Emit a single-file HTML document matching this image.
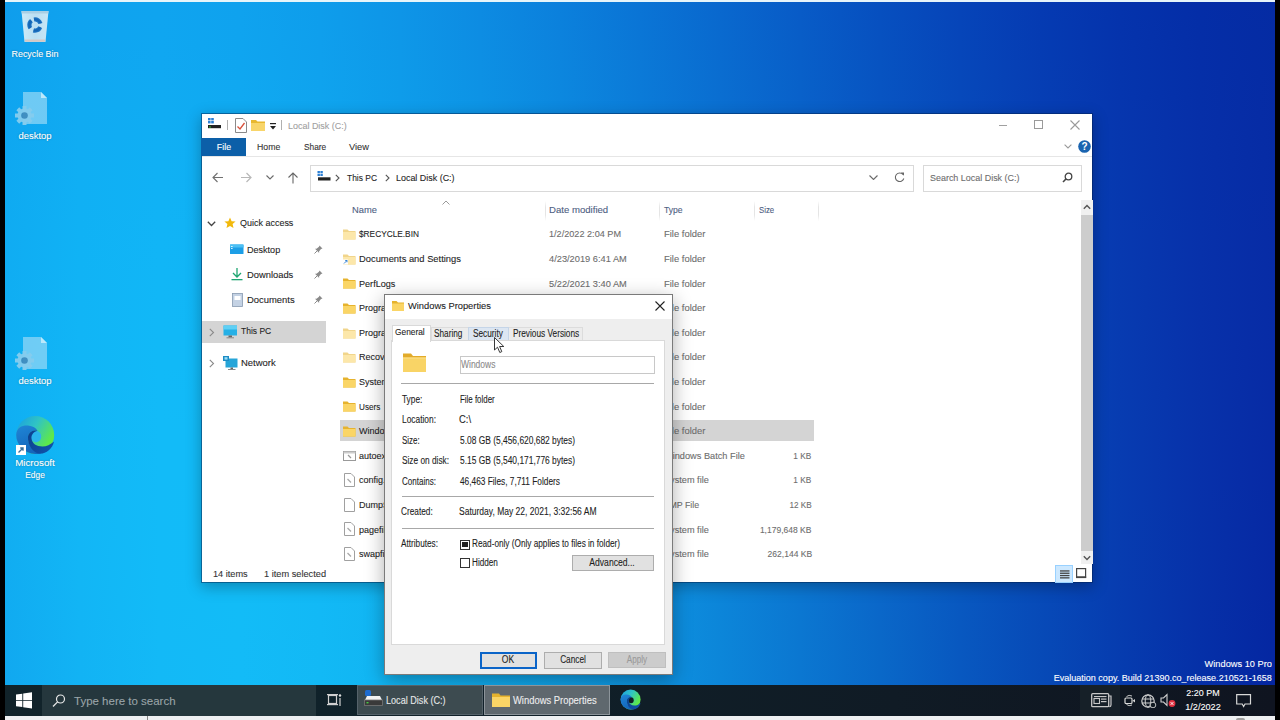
<!DOCTYPE html><html><head><meta charset="utf-8"><style>
html,body{margin:0;padding:0;}
body{width:1280px;height:720px;overflow:hidden;position:relative;background:#000;font-family:"Liberation Sans", sans-serif;}
.r{position:absolute;}
.t{position:absolute;white-space:nowrap;-webkit-text-stroke:0.1px;}
</style></head><body>
<div class="r" style="left:5px;top:0;width:1270px;height:716px;overflow:hidden"><div class="r" style="left:-5px;top:0;width:1280px;height:716px"><div class="r" style="left:0;top:0px;width:1280px;height:10px;background:linear-gradient(90deg,#0f9cec 0px,#0fa2ef 80px,#0fa3ef 160px,#0fa1ee 240px,#0e9ceb 320px,#0d94e7 400px,#0c8ae2 480px,#0b7fdc 560px,#0a74d5 640px,#0967ce 720px,#075bc6 800px,#064fbf 880px,#0544b8 960px,#053ab1 1040px,#0432ac 1120px,#042da7 1200px,#042ba3 1280px)"></div><div class="r" style="left:0;top:10px;width:1280px;height:10px;background:linear-gradient(90deg,#0f9dec 0px,#0fa3ef 80px,#0fa4ef 160px,#0fa2ee 240px,#0e9deb 320px,#0e95e7 400px,#0d8be2 480px,#0b80dc 560px,#0a74d5 640px,#0968ce 720px,#085bc7 800px,#064fbf 880px,#0644b8 960px,#053ab2 1040px,#0433ac 1120px,#042da7 1200px,#052ba3 1280px)"></div><div class="r" style="left:0;top:20px;width:1280px;height:10px;background:linear-gradient(90deg,#0f9eed 0px,#0fa3ef 80px,#0fa5f0 160px,#0fa3ef 240px,#0e9eec 320px,#0e96e8 400px,#0d8ce2 480px,#0b81dc 560px,#0a75d6 640px,#0969ce 720px,#085cc7 800px,#0750c0 880px,#0645b9 960px,#053bb2 1040px,#0533ac 1120px,#042ea7 1200px,#052ba3 1280px)"></div><div class="r" style="left:0;top:30px;width:1280px;height:10px;background:linear-gradient(90deg,#0f9fed 0px,#0fa4f0 80px,#0fa6f0 160px,#0fa4ef 240px,#0f9fec 320px,#0e97e8 400px,#0d8de3 480px,#0c82dd 560px,#0a76d6 640px,#096acf 720px,#085dc7 800px,#0751c0 880px,#0645b9 960px,#053bb2 1040px,#0533ac 1120px,#052ea7 1200px,#052ba3 1280px)"></div><div class="r" style="left:0;top:40px;width:1280px;height:10px;background:linear-gradient(90deg,#0fa0ed 0px,#0fa5f0 80px,#0fa7f1 160px,#0fa5ef 240px,#0f9fed 320px,#0e98e8 400px,#0d8ee3 480px,#0c83dd 560px,#0a77d6 640px,#096acf 720px,#085ec8 800px,#0751c0 880px,#0646b9 960px,#053cb3 1040px,#0534ad 1120px,#052ea7 1200px,#052ba3 1280px)"></div><div class="r" style="left:0;top:50px;width:1280px;height:10px;background:linear-gradient(90deg,#0fa1ee 0px,#0fa6f0 80px,#10a7f1 160px,#0fa5f0 240px,#0fa0ed 320px,#0e99e9 400px,#0d8fe4 480px,#0c84de 560px,#0b78d7 640px,#096bd0 720px,#085ec8 800px,#0752c1 880px,#0646ba 960px,#053cb3 1040px,#0534ad 1120px,#052ea8 1200px,#052ba3 1280px)"></div><div class="r" style="left:0;top:60px;width:1280px;height:10px;background:linear-gradient(90deg,#0fa1ee 0px,#0fa7f1 80px,#10a8f1 160px,#0fa6f0 240px,#0fa1ed 320px,#0e9ae9 400px,#0d90e4 480px,#0c85de 560px,#0b79d7 640px,#096cd0 720px,#085fc9 800px,#0753c1 880px,#0647ba 960px,#063db3 1040px,#0534ad 1120px,#052ea8 1200px,#052ba4 1280px)"></div><div class="r" style="left:0;top:70px;width:1280px;height:10px;background:linear-gradient(90deg,#0fa2ee 0px,#10a8f1 80px,#10a9f2 160px,#0fa7f0 240px,#0fa2ee 320px,#0e9bea 400px,#0d91e4 480px,#0c86de 560px,#0b7ad8 640px,#0a6dd0 720px,#0860c9 800px,#0753c1 880px,#0648ba 960px,#063db3 1040px,#0535ad 1120px,#052fa8 1200px,#052ba4 1280px)"></div><div class="r" style="left:0;top:80px;width:1280px;height:10px;background:linear-gradient(90deg,#0fa3ee 0px,#10a8f1 80px,#10aaf2 160px,#10a8f1 240px,#0fa3ee 320px,#0e9cea 400px,#0d92e5 480px,#0c87df 560px,#0b7ad8 640px,#0a6ed1 720px,#0861c9 800px,#0754c2 880px,#0648ba 960px,#063eb4 1040px,#0535ad 1120px,#052fa8 1200px,#062ba4 1280px)"></div><div class="r" style="left:0;top:90px;width:1280px;height:10px;background:linear-gradient(90deg,#0fa4ef 0px,#10a9f1 80px,#10abf2 160px,#10a9f1 240px,#0fa4ee 320px,#0e9cea 400px,#0d93e5 480px,#0c88df 560px,#0b7bd8 640px,#0a6ed1 720px,#0961ca 800px,#0854c2 880px,#0749bb 960px,#063eb4 1040px,#0535ae 1120px,#052fa8 1200px,#062ba4 1280px)"></div><div class="r" style="left:0;top:100px;width:1280px;height:10px;background:linear-gradient(90deg,#0fa4ef 0px,#10aaf2 80px,#10acf2 160px,#10aaf1 240px,#0fa5ef 320px,#0e9deb 400px,#0d94e5 480px,#0c88df 560px,#0b7cd9 640px,#0a6fd1 720px,#0962ca 800px,#0855c2 880px,#0749bb 960px,#063eb4 1040px,#0636ae 1120px,#052fa8 1200px,#062ba4 1280px)"></div><div class="r" style="left:0;top:110px;width:1280px;height:10px;background:linear-gradient(90deg,#0fa5ef 0px,#10abf2 80px,#10acf3 160px,#10abf2 240px,#0fa6ef 320px,#0f9eeb 400px,#0e94e6 480px,#0c89e0 560px,#0b7dd9 640px,#0a70d2 720px,#0963ca 800px,#0856c3 880px,#074abb 960px,#063fb4 1040px,#0636ae 1120px,#062fa8 1200px,#062ba4 1280px)"></div><div class="r" style="left:0;top:120px;width:1280px;height:10px;background:linear-gradient(90deg,#0fa5ef 0px,#10abf2 80px,#10adf3 160px,#10abf2 240px,#0fa6ef 320px,#0f9feb 400px,#0e95e6 480px,#0d8ae0 560px,#0b7ed9 640px,#0a70d2 720px,#0963ca 800px,#0856c3 880px,#074abb 960px,#063fb4 1040px,#0636ae 1120px,#062fa9 1200px,#062ba4 1280px)"></div><div class="r" style="left:0;top:130px;width:1280px;height:10px;background:linear-gradient(90deg,#0fa6f0 0px,#10acf3 80px,#10aef3 160px,#10acf2 240px,#0fa7f0 320px,#0fa0ec 400px,#0e96e6 480px,#0d8be0 560px,#0b7eda 640px,#0a71d2 720px,#0964cb 800px,#0857c3 880px,#074bbc 960px,#0640b5 1040px,#0637ae 1120px,#0630a9 1200px,#062ba4 1280px)"></div><div class="r" style="left:0;top:140px;width:1280px;height:10px;background:linear-gradient(90deg,#0fa7f0 0px,#10adf3 80px,#10aff4 160px,#10adf3 240px,#10a8f0 320px,#0fa1ec 400px,#0e97e7 480px,#0d8ce1 560px,#0c7fda 640px,#0a72d3 720px,#0965cb 800px,#0857c3 880px,#074bbc 960px,#0640b5 1040px,#0637ae 1120px,#0630a9 1200px,#062ba4 1280px)"></div><div class="r" style="left:0;top:150px;width:1280px;height:10px;background:linear-gradient(90deg,#0fa7f0 0px,#10adf3 80px,#10aff4 160px,#10aef3 240px,#10a9f0 320px,#0fa1ec 400px,#0e98e7 480px,#0d8ce1 560px,#0c80da 640px,#0a73d3 720px,#0965cb 800px,#0858c4 880px,#074cbc 960px,#0740b5 1040px,#0637af 1120px,#0630a9 1200px,#062ba4 1280px)"></div><div class="r" style="left:0;top:160px;width:1280px;height:10px;background:linear-gradient(90deg,#0fa8f0 0px,#10aef3 80px,#10b0f4 160px,#10aef3 240px,#10aaf1 320px,#0fa2ed 400px,#0e98e7 480px,#0d8de1 560px,#0c81da 640px,#0b73d3 720px,#0966cc 800px,#0859c4 880px,#074cbc 960px,#0741b5 1040px,#0637af 1120px,#0630a9 1200px,#062ba4 1280px)"></div><div class="r" style="left:0;top:170px;width:1280px;height:10px;background:linear-gradient(90deg,#0fa8f0 0px,#10aff3 80px,#10b1f4 160px,#10aff3 240px,#10aaf1 320px,#0fa3ed 400px,#0e99e8 480px,#0d8ee2 560px,#0c81db 640px,#0b74d3 720px,#0966cc 800px,#0859c4 880px,#074dbd 960px,#0741b5 1040px,#0638af 1120px,#0630a9 1200px,#062ba5 1280px)"></div><div class="r" style="left:0;top:180px;width:1280px;height:10px;background:linear-gradient(90deg,#0fa9f1 0px,#10aff4 80px,#10b1f5 160px,#10b0f4 240px,#10abf1 320px,#0fa4ed 400px,#0e9ae8 480px,#0d8fe2 560px,#0c82db 640px,#0b75d4 720px,#0a67cc 800px,#085ac4 880px,#084dbd 960px,#0742b6 1040px,#0638af 1120px,#0630a9 1200px,#062ba5 1280px)"></div><div class="r" style="left:0;top:190px;width:1280px;height:10px;background:linear-gradient(90deg,#0fa9f1 0px,#10b0f4 80px,#10b2f5 160px,#10b0f4 240px,#10acf1 320px,#0fa4ed 400px,#0e9be8 480px,#0d8fe2 560px,#0c83db 640px,#0b75d4 720px,#0a68cc 800px,#095ac5 880px,#084dbd 960px,#0742b6 1040px,#0638af 1120px,#0630a9 1200px,#072ba5 1280px)"></div><div class="r" style="left:0;top:200px;width:1280px;height:10px;background:linear-gradient(90deg,#0faaf1 0px,#10b0f4 80px,#10b2f5 160px,#10b1f4 240px,#10acf2 320px,#0fa5ee 400px,#0e9be9 480px,#0d90e2 560px,#0c83dc 640px,#0b76d4 720px,#0a68cd 800px,#095bc5 880px,#084ebd 960px,#0742b6 1040px,#0638af 1120px,#0630a9 1200px,#072ba5 1280px)"></div><div class="r" style="left:0;top:210px;width:1280px;height:10px;background:linear-gradient(90deg,#0faaf1 0px,#10b1f4 80px,#11b3f5 160px,#10b2f4 240px,#10adf2 320px,#0fa6ee 400px,#0e9ce9 480px,#0d91e3 560px,#0c84dc 640px,#0b76d5 720px,#0a69cd 800px,#095bc5 880px,#084ebd 960px,#0743b6 1040px,#0738af 1120px,#0631aa 1200px,#072ba5 1280px)"></div><div class="r" style="left:0;top:220px;width:1280px;height:10px;background:linear-gradient(90deg,#10abf1 0px,#10b1f4 80px,#11b4f5 160px,#11b2f5 240px,#10aef2 320px,#0fa6ee 400px,#0e9de9 480px,#0d91e3 560px,#0c85dc 640px,#0b77d5 720px,#0a69cd 800px,#095cc5 880px,#084fbe 960px,#0743b6 1040px,#0739b0 1120px,#0631aa 1200px,#072ba5 1280px)"></div><div class="r" style="left:0;top:230px;width:1280px;height:10px;background:linear-gradient(90deg,#10abf1 0px,#10b2f5 80px,#11b4f6 160px,#11b3f5 240px,#10aef2 320px,#0fa7ee 400px,#0f9de9 480px,#0e92e3 560px,#0c85dc 640px,#0b78d5 720px,#0a6acd 800px,#095cc5 880px,#084fbe 960px,#0743b6 1040px,#0739b0 1120px,#0731aa 1200px,#072ba5 1280px)"></div><div class="r" style="left:0;top:240px;width:1280px;height:10px;background:linear-gradient(90deg,#10abf2 0px,#10b2f5 80px,#11b5f6 160px,#11b3f5 240px,#10aff3 320px,#10a8ef 400px,#0f9eea 480px,#0e93e3 560px,#0c86dd 640px,#0b78d5 720px,#0a6ace 800px,#095dc6 880px,#084fbe 960px,#0743b7 1040px,#0739b0 1120px,#0731aa 1200px,#072ba5 1280px)"></div><div class="r" style="left:0;top:250px;width:1280px;height:10px;background:linear-gradient(90deg,#10acf2 0px,#10b3f5 80px,#11b5f6 160px,#11b4f5 240px,#10aff3 320px,#10a8ef 400px,#0f9fea 480px,#0e93e4 560px,#0d86dd 640px,#0b79d5 720px,#0a6bce 800px,#095dc6 880px,#0850be 960px,#0744b7 1040px,#0739b0 1120px,#0731aa 1200px,#072ba5 1280px)"></div><div class="r" style="left:0;top:260px;width:1280px;height:10px;background:linear-gradient(90deg,#10acf2 0px,#10b3f5 80px,#11b6f6 160px,#11b4f5 240px,#10b0f3 320px,#10a9ef 400px,#0f9fea 480px,#0e94e4 560px,#0d87dd 640px,#0b79d6 720px,#0a6bce 800px,#095ec6 880px,#0850be 960px,#0744b7 1040px,#073ab0 1120px,#0731aa 1200px,#072ba5 1280px)"></div><div class="r" style="left:0;top:270px;width:1280px;height:10px;background:linear-gradient(90deg,#10acf2 0px,#11b3f5 80px,#11b6f6 160px,#11b5f6 240px,#10b1f3 320px,#10a9ef 400px,#0fa0ea 480px,#0e94e4 560px,#0d88dd 640px,#0b7ad6 720px,#0a6cce 800px,#095ec6 880px,#0851be 960px,#0744b7 1040px,#073ab0 1120px,#0731aa 1200px,#072ba5 1280px)"></div><div class="r" style="left:0;top:280px;width:1280px;height:10px;background:linear-gradient(90deg,#10adf2 0px,#11b4f5 80px,#11b7f6 160px,#11b5f6 240px,#11b1f3 320px,#10aaf0 400px,#0fa0ea 480px,#0e95e4 560px,#0d88de 640px,#0c7ad6 720px,#0a6cce 800px,#095ec6 880px,#0851bf 960px,#0745b7 1040px,#073ab0 1120px,#0731aa 1200px,#072ba5 1280px)"></div><div class="r" style="left:0;top:290px;width:1280px;height:10px;background:linear-gradient(90deg,#10adf2 0px,#11b4f5 80px,#11b7f7 160px,#11b6f6 240px,#11b2f4 320px,#10aaf0 400px,#0fa1eb 480px,#0e95e5 560px,#0d89de 640px,#0c7bd6 720px,#0a6dcf 800px,#095fc7 880px,#0851bf 960px,#0845b7 1040px,#073ab0 1120px,#0731aa 1200px,#072ba5 1280px)"></div><div class="r" style="left:0;top:300px;width:1280px;height:10px;background:linear-gradient(90deg,#10adf2 0px,#11b4f6 80px,#11b7f7 160px,#11b6f6 240px,#11b2f4 320px,#10abf0 400px,#0fa1eb 480px,#0e96e5 560px,#0d89de 640px,#0c7bd6 720px,#0a6dcf 800px,#095fc7 880px,#0852bf 960px,#0845b7 1040px,#073ab0 1120px,#0731aa 1200px,#072ba5 1280px)"></div><div class="r" style="left:0;top:310px;width:1280px;height:10px;background:linear-gradient(90deg,#10adf2 0px,#11b5f6 80px,#11b8f7 160px,#11b7f6 240px,#11b3f4 320px,#10abf0 400px,#0fa2eb 480px,#0e97e5 560px,#0d8ade 640px,#0c7cd7 720px,#0b6ecf 800px,#0960c7 880px,#0852bf 960px,#0845b7 1040px,#073ab0 1120px,#0731aa 1200px,#072ba5 1280px)"></div><div class="r" style="left:0;top:320px;width:1280px;height:10px;background:linear-gradient(90deg,#10aef2 0px,#11b5f6 80px,#11b8f7 160px,#11b7f6 240px,#11b3f4 320px,#10acf0 400px,#0fa2eb 480px,#0e97e5 560px,#0d8ade 640px,#0c7cd7 720px,#0b6ecf 800px,#0960c7 880px,#0852bf 960px,#0846b8 1040px,#073bb0 1120px,#0731aa 1200px,#072ba5 1280px)"></div><div class="r" style="left:0;top:330px;width:1280px;height:10px;background:linear-gradient(90deg,#10aef2 0px,#11b5f6 80px,#11b8f7 160px,#11b8f7 240px,#11b4f4 320px,#10acf0 400px,#0fa3eb 480px,#0e98e5 560px,#0d8bdf 640px,#0c7dd7 720px,#0b6fcf 800px,#0960c7 880px,#0853bf 960px,#0846b8 1040px,#073bb1 1120px,#0731aa 1200px,#072ba5 1280px)"></div><div class="r" style="left:0;top:340px;width:1280px;height:10px;background:linear-gradient(90deg,#10aef2 0px,#11b6f6 80px,#11b9f7 160px,#11b8f7 240px,#11b4f4 320px,#10adf1 400px,#0fa3ec 480px,#0e98e6 560px,#0d8bdf 640px,#0c7dd7 720px,#0b6fcf 800px,#0a61c7 880px,#0953bf 960px,#0846b8 1040px,#073bb1 1120px,#0731aa 1200px,#072aa5 1280px)"></div><div class="r" style="left:0;top:350px;width:1280px;height:10px;background:linear-gradient(90deg,#10aef2 0px,#11b6f6 80px,#11b9f7 160px,#11b8f7 240px,#11b4f5 320px,#10adf1 400px,#0fa4ec 480px,#0e99e6 560px,#0d8cdf 640px,#0c7ed7 720px,#0b70cf 800px,#0a61c7 880px,#0953bf 960px,#0846b8 1040px,#073bb1 1120px,#0731aa 1200px,#072aa5 1280px)"></div><div class="r" style="left:0;top:360px;width:1280px;height:10px;background:linear-gradient(90deg,#10aef2 0px,#11b6f6 80px,#11b9f7 160px,#11b9f7 240px,#11b5f5 320px,#10aef1 400px,#0fa4ec 480px,#0e99e6 560px,#0d8cdf 640px,#0c7ed8 720px,#0b70d0 800px,#0a62c8 880px,#0954c0 960px,#0847b8 1040px,#073bb1 1120px,#0731aa 1200px,#072aa5 1280px)"></div><div class="r" style="left:0;top:370px;width:1280px;height:10px;background:linear-gradient(90deg,#10aef2 0px,#11b6f6 80px,#11baf8 160px,#11b9f7 240px,#11b5f5 320px,#10aef1 400px,#0fa5ec 480px,#0e99e6 560px,#0d8ddf 640px,#0c7fd8 720px,#0b70d0 800px,#0a62c8 880px,#0954c0 960px,#0847b8 1040px,#073bb1 1120px,#0731aa 1200px,#072aa5 1280px)"></div><div class="r" style="left:0;top:380px;width:1280px;height:10px;background:linear-gradient(90deg,#10aef2 0px,#11b6f6 80px,#11baf8 160px,#11b9f7 240px,#11b6f5 320px,#10aff1 400px,#10a5ec 480px,#0e9ae6 560px,#0d8ddf 640px,#0c7fd8 720px,#0b71d0 800px,#0a62c8 880px,#0954c0 960px,#0847b8 1040px,#073bb1 1120px,#0732aa 1200px,#072aa4 1280px)"></div><div class="r" style="left:0;top:390px;width:1280px;height:10px;background:linear-gradient(90deg,#10aef2 0px,#11b7f6 80px,#12baf8 160px,#12baf7 240px,#11b6f5 320px,#10aff1 400px,#10a6ec 480px,#0f9ae6 560px,#0d8ddf 640px,#0c80d8 720px,#0b71d0 800px,#0a63c8 880px,#0954c0 960px,#0847b8 1040px,#073bb1 1120px,#0732aa 1200px,#072aa4 1280px)"></div><div class="r" style="left:0;top:400px;width:1280px;height:10px;background:linear-gradient(90deg,#10aef2 0px,#11b7f6 80px,#12baf8 160px,#12baf7 240px,#11b6f5 320px,#11aff1 400px,#10a6ed 480px,#0f9be6 560px,#0d8ee0 640px,#0c80d8 720px,#0b71d0 800px,#0a63c8 880px,#0955c0 960px,#0847b8 1040px,#073cb1 1120px,#0732aa 1200px,#072aa4 1280px)"></div><div class="r" style="left:0;top:410px;width:1280px;height:10px;background:linear-gradient(90deg,#10aef2 0px,#11b7f6 80px,#12bbf8 160px,#12baf7 240px,#11b7f5 320px,#11b0f2 400px,#10a6ed 480px,#0f9be7 560px,#0d8ee0 640px,#0c80d8 720px,#0b72d0 800px,#0a63c8 880px,#0955c0 960px,#0848b8 1040px,#073cb1 1120px,#0732aa 1200px,#072aa4 1280px)"></div><div class="r" style="left:0;top:420px;width:1280px;height:10px;background:linear-gradient(90deg,#10aef2 0px,#11b7f6 80px,#12bbf8 160px,#12bbf7 240px,#11b7f5 320px,#11b0f2 400px,#10a7ed 480px,#0f9ce7 560px,#0d8fe0 640px,#0c81d8 720px,#0b72d0 800px,#0a63c8 880px,#0955c0 960px,#0848b8 1040px,#073cb1 1120px,#0732aa 1200px,#072aa4 1280px)"></div><div class="r" style="left:0;top:430px;width:1280px;height:10px;background:linear-gradient(90deg,#10aef2 0px,#11b7f6 80px,#12bbf8 160px,#12bbf8 240px,#11b7f5 320px,#11b0f2 400px,#10a7ed 480px,#0f9ce7 560px,#0e8fe0 640px,#0c81d8 720px,#0b72d0 800px,#0a64c8 880px,#0955c0 960px,#0848b8 1040px,#073cb1 1120px,#0731aa 1200px,#072aa4 1280px)"></div><div class="r" style="left:0;top:440px;width:1280px;height:10px;background:linear-gradient(90deg,#10aef2 0px,#11b7f6 80px,#12bbf8 160px,#12bbf8 240px,#11b7f6 320px,#11b1f2 400px,#10a8ed 480px,#0f9ce7 560px,#0e8fe0 640px,#0c81d8 720px,#0b73d1 800px,#0a64c8 880px,#0956c0 960px,#0848b8 1040px,#073cb1 1120px,#0731aa 1200px,#0729a4 1280px)"></div><div class="r" style="left:0;top:450px;width:1280px;height:10px;background:linear-gradient(90deg,#10aef2 0px,#11b7f6 80px,#12bbf8 160px,#12bbf8 240px,#11b8f6 320px,#11b1f2 400px,#10a8ed 480px,#0f9de7 560px,#0e90e0 640px,#0c82d9 720px,#0b73d1 800px,#0a64c8 880px,#0956c0 960px,#0848b8 1040px,#073cb1 1120px,#0731aa 1200px,#0729a4 1280px)"></div><div class="r" style="left:0;top:460px;width:1280px;height:10px;background:linear-gradient(90deg,#11aef2 0px,#11b7f6 80px,#12bbf8 160px,#12bbf8 240px,#11b8f6 320px,#11b1f2 400px,#10a8ed 480px,#0f9de7 560px,#0e90e0 640px,#0c82d9 720px,#0b73d1 800px,#0a65c8 880px,#0956c0 960px,#0848b8 1040px,#073cb1 1120px,#0731aa 1200px,#0729a4 1280px)"></div><div class="r" style="left:0;top:470px;width:1280px;height:10px;background:linear-gradient(90deg,#11aef2 0px,#11b7f6 80px,#12bbf8 160px,#12bbf8 240px,#12b8f6 320px,#11b2f2 400px,#10a8ed 480px,#0f9de7 560px,#0e90e0 640px,#0c82d9 720px,#0b74d1 800px,#0a65c8 880px,#0956c0 960px,#0849b8 1040px,#073cb1 1120px,#0731aa 1200px,#0729a4 1280px)"></div><div class="r" style="left:0;top:480px;width:1280px;height:10px;background:linear-gradient(90deg,#11aef2 0px,#12b7f6 80px,#12bbf8 160px,#12bcf8 240px,#12b8f6 320px,#11b2f2 400px,#10a9ed 480px,#0f9ee7 560px,#0e91e0 640px,#0c83d9 720px,#0b74d1 800px,#0a65c9 880px,#0956c0 960px,#0849b8 1040px,#073cb1 1120px,#0731aa 1200px,#0729a4 1280px)"></div><div class="r" style="left:0;top:490px;width:1280px;height:10px;background:linear-gradient(90deg,#11aef2 0px,#12b7f6 80px,#12bbf8 160px,#12bcf8 240px,#12b8f6 320px,#11b2f2 400px,#10a9ed 480px,#0f9ee7 560px,#0e91e0 640px,#0c83d9 720px,#0b74d1 800px,#0a65c9 880px,#0957c0 960px,#0849b8 1040px,#073cb1 1120px,#0731aa 1200px,#0629a3 1280px)"></div><div class="r" style="left:0;top:500px;width:1280px;height:10px;background:linear-gradient(90deg,#11aef2 0px,#12b7f6 80px,#12bbf8 160px,#12bcf8 240px,#12b9f6 320px,#11b2f2 400px,#10a9ed 480px,#0f9ee7 560px,#0e91e1 640px,#0c83d9 720px,#0b74d1 800px,#0a66c9 880px,#0957c0 960px,#0849b8 1040px,#073cb1 1120px,#0731a9 1200px,#0629a3 1280px)"></div><div class="r" style="left:0;top:510px;width:1280px;height:10px;background:linear-gradient(90deg,#11adf2 0px,#12b7f6 80px,#12bbf8 160px,#12bcf8 240px,#12b9f6 320px,#11b2f2 400px,#10aaed 480px,#0f9ee7 560px,#0e92e1 640px,#0c83d9 720px,#0b75d1 800px,#0a66c9 880px,#0957c0 960px,#0849b8 1040px,#073cb0 1120px,#0631a9 1200px,#0628a3 1280px)"></div><div class="r" style="left:0;top:520px;width:1280px;height:10px;background:linear-gradient(90deg,#11adf2 0px,#12b7f6 80px,#12bbf8 160px,#12bcf8 240px,#12b9f6 320px,#11b3f2 400px,#10aaee 480px,#0f9fe8 560px,#0e92e1 640px,#0c84d9 720px,#0b75d1 800px,#0a66c9 880px,#0957c0 960px,#0849b8 1040px,#073cb0 1120px,#0631a9 1200px,#0628a3 1280px)"></div><div class="r" style="left:0;top:530px;width:1280px;height:10px;background:linear-gradient(90deg,#11adf2 0px,#12b7f6 80px,#12bbf8 160px,#12bcf8 240px,#12b9f6 320px,#11b3f2 400px,#10aaee 480px,#0f9fe8 560px,#0e92e1 640px,#0c84d9 720px,#0b75d1 800px,#0a66c9 880px,#0957c0 960px,#0849b8 1040px,#073cb0 1120px,#0631a9 1200px,#0628a3 1280px)"></div><div class="r" style="left:0;top:540px;width:1280px;height:10px;background:linear-gradient(90deg,#11adf1 0px,#12b6f6 80px,#12bbf8 160px,#12bcf8 240px,#12b9f6 320px,#11b3f2 400px,#10aaee 480px,#0f9fe8 560px,#0e92e1 640px,#0c84d9 720px,#0b75d1 800px,#0a66c9 880px,#0957c0 960px,#0849b8 1040px,#073cb0 1120px,#0631a9 1200px,#0628a3 1280px)"></div><div class="r" style="left:0;top:550px;width:1280px;height:10px;background:linear-gradient(90deg,#11acf1 0px,#12b6f6 80px,#12bbf8 160px,#12bcf8 240px,#12b9f6 320px,#11b3f2 400px,#10aaee 480px,#0f9fe8 560px,#0e92e1 640px,#0c84d9 720px,#0b76d1 800px,#0a66c9 880px,#0958c0 960px,#0849b8 1040px,#073cb0 1120px,#0631a9 1200px,#0628a3 1280px)"></div><div class="r" style="left:0;top:560px;width:1280px;height:10px;background:linear-gradient(90deg,#11acf1 0px,#12b6f6 80px,#12bbf8 160px,#12bcf8 240px,#12b9f6 320px,#11b3f2 400px,#10aaee 480px,#0f9fe8 560px,#0e93e1 640px,#0c85d9 720px,#0b76d1 800px,#0a67c9 880px,#0958c0 960px,#0749b8 1040px,#073cb0 1120px,#0631a9 1200px,#0627a2 1280px)"></div><div class="r" style="left:0;top:570px;width:1280px;height:10px;background:linear-gradient(90deg,#11acf1 0px,#12b6f5 80px,#12bbf8 160px,#12bcf8 240px,#12b9f6 320px,#11b3f2 400px,#10abee 480px,#0fa0e8 560px,#0e93e1 640px,#0c85d9 720px,#0b76d1 800px,#0a67c9 880px,#0958c0 960px,#0749b8 1040px,#073cb0 1120px,#0631a9 1200px,#0627a2 1280px)"></div><div class="r" style="left:0;top:580px;width:1280px;height:10px;background:linear-gradient(90deg,#11abf1 0px,#12b6f5 80px,#12bbf7 160px,#12bcf8 240px,#12b9f6 320px,#11b3f2 400px,#10abee 480px,#0fa0e8 560px,#0e93e1 640px,#0c85d9 720px,#0b76d1 800px,#0a67c9 880px,#0858c0 960px,#0749b8 1040px,#073cb0 1120px,#0631a9 1200px,#0627a2 1280px)"></div><div class="r" style="left:0;top:590px;width:1280px;height:10px;background:linear-gradient(90deg,#11abf1 0px,#12b5f5 80px,#12bbf7 160px,#12bcf7 240px,#12b9f6 320px,#11b4f2 400px,#10abee 480px,#0fa0e8 560px,#0e93e1 640px,#0c85d9 720px,#0b76d1 800px,#0a67c9 880px,#0858c0 960px,#074ab8 1040px,#063cb0 1120px,#0631a8 1200px,#0627a2 1280px)"></div><div class="r" style="left:0;top:600px;width:1280px;height:10px;background:linear-gradient(90deg,#11abf1 0px,#12b5f5 80px,#12bbf7 160px,#12bcf7 240px,#12b9f6 320px,#11b4f2 400px,#10abee 480px,#0fa0e8 560px,#0e93e1 640px,#0c85d9 720px,#0b76d1 800px,#0a67c9 880px,#0858c0 960px,#074ab8 1040px,#063cb0 1120px,#0630a8 1200px,#0527a2 1280px)"></div><div class="r" style="left:0;top:610px;width:1280px;height:10px;background:linear-gradient(90deg,#11aaf0 0px,#12b5f5 80px,#12baf7 160px,#12bcf7 240px,#12b9f6 320px,#11b4f2 400px,#10abee 480px,#0fa0e8 560px,#0e94e1 640px,#0c85d9 720px,#0b77d1 800px,#0a67c9 880px,#0858c0 960px,#074ab8 1040px,#063cb0 1120px,#0630a8 1200px,#0527a2 1280px)"></div><div class="r" style="left:0;top:620px;width:1280px;height:10px;background:linear-gradient(90deg,#11aaf0 0px,#12b4f5 80px,#13baf7 160px,#12bcf7 240px,#12b9f6 320px,#11b4f2 400px,#10abee 480px,#0fa0e8 560px,#0e94e1 640px,#0c86d9 720px,#0b77d1 800px,#0a67c8 880px,#0858c0 960px,#074ab8 1040px,#063caf 1120px,#0630a8 1200px,#0526a1 1280px)"></div><div class="r" style="left:0;top:630px;width:1280px;height:10px;background:linear-gradient(90deg,#11a9f0 0px,#12b4f5 80px,#13baf7 160px,#13bbf7 240px,#12b9f5 320px,#11b4f2 400px,#10abed 480px,#0fa0e8 560px,#0e94e1 640px,#0c86d9 720px,#0b77d1 800px,#0a68c8 880px,#0858c0 960px,#074ab7 1040px,#063caf 1120px,#0530a8 1200px,#0526a1 1280px)"></div><div class="r" style="left:0;top:640px;width:1280px;height:10px;background:linear-gradient(90deg,#11a9f0 0px,#12b4f4 80px,#13baf7 160px,#13bbf7 240px,#12b9f5 320px,#11b4f2 400px,#10abed 480px,#0fa0e8 560px,#0e94e1 640px,#0c86d9 720px,#0b77d1 800px,#0968c8 880px,#0858c0 960px,#074ab7 1040px,#063caf 1120px,#0530a8 1200px,#0526a1 1280px)"></div><div class="r" style="left:0;top:650px;width:1280px;height:10px;background:linear-gradient(90deg,#11a8f0 0px,#12b3f4 80px,#13b9f7 160px,#13bbf7 240px,#12b9f5 320px,#11b4f2 400px,#10abed 480px,#0fa1e7 560px,#0e94e1 640px,#0c86d9 720px,#0b77d1 800px,#0968c8 880px,#0858c0 960px,#074ab7 1040px,#063caf 1120px,#0530a8 1200px,#0526a1 1280px)"></div><div class="r" style="left:0;top:660px;width:1280px;height:10px;background:linear-gradient(90deg,#11a8ef 0px,#12b3f4 80px,#13b9f6 160px,#13bbf7 240px,#12b9f5 320px,#11b4f2 400px,#10abed 480px,#0fa1e7 560px,#0e94e1 640px,#0c86d9 720px,#0b77d1 800px,#0968c8 880px,#0858c0 960px,#074ab7 1040px,#063caf 1120px,#0530a7 1200px,#0525a1 1280px)"></div><div class="r" style="left:0;top:670px;width:1280px;height:10px;background:linear-gradient(90deg,#11a7ef 0px,#12b3f4 80px,#13b9f6 160px,#13bbf7 240px,#12b9f5 320px,#11b4f2 400px,#10abed 480px,#0fa1e7 560px,#0e94e1 640px,#0c86d9 720px,#0b77d1 800px,#0968c8 880px,#0858c0 960px,#074ab7 1040px,#063caf 1120px,#0530a7 1200px,#0525a0 1280px)"></div><div class="r" style="left:0;top:680px;width:1280px;height:10px;background:linear-gradient(90deg,#11a7ef 0px,#12b2f4 80px,#13b9f6 160px,#13bbf7 240px,#12b9f5 320px,#11b3f2 400px,#10abed 480px,#0fa1e7 560px,#0e94e0 640px,#0c86d9 720px,#0b77d1 800px,#0968c8 880px,#0858bf 960px,#074ab7 1040px,#063caf 1120px,#052fa7 1200px,#0425a0 1280px)"></div><div class="r" style="left:0;top:690px;width:1280px;height:10px;background:linear-gradient(90deg,#12a6ef 0px,#12b2f3 80px,#13b8f6 160px,#13baf6 240px,#12b9f5 320px,#11b3f2 400px,#10abed 480px,#0fa1e7 560px,#0e94e0 640px,#0c86d9 720px,#0b77d1 800px,#0968c8 880px,#0858bf 960px,#074ab7 1040px,#053cae 1120px,#052fa7 1200px,#0425a0 1280px)"></div><div class="r" style="left:0;top:700px;width:1280px;height:10px;background:linear-gradient(90deg,#12a6ee 0px,#12b1f3 80px,#13b8f6 160px,#13baf6 240px,#12b8f5 320px,#11b3f2 400px,#10abed 480px,#0fa1e7 560px,#0e94e0 640px,#0c86d9 720px,#0b77d0 800px,#0968c8 880px,#0858bf 960px,#064ab7 1040px,#053cae 1120px,#052fa7 1200px,#0424a0 1280px)"></div><div class="r" style="left:0;top:710px;width:1280px;height:10px;background:linear-gradient(90deg,#12a5ee 0px,#12b1f3 80px,#13b7f6 160px,#13baf6 240px,#12b8f5 320px,#12b3f1 400px,#10abed 480px,#0fa1e7 560px,#0e94e0 640px,#0c86d9 720px,#0b77d0 800px,#0968c8 880px,#0858bf 960px,#0649b6 1040px,#053bae 1120px,#042fa6 1200px,#04249f 1280px)"></div></div></div>
<div class="r" style="left:5px;top:0px;width:1270px;height:2px;background:#e6f4fa;"></div>
<div class="r" style="left:5px;top:716px;width:1270px;height:4px;background:#eef0f2;"></div>
<svg class="r" style="left:18px;top:8px" width="34" height="36" viewBox="0 0 34 36">
<defs><linearGradient id="rb" x1="0" y1="0" x2="1" y2="0"><stop offset="0" stop-color="#d6eef8"/><stop offset="0.5" stop-color="#c4e2f2"/><stop offset="1" stop-color="#d0eaf6"/></linearGradient></defs>
<path d="M3.5 3 L30.5 3 L27.5 34 L6.5 34 Z" fill="url(#rb)" opacity="0.95"/>
<path d="M3.5 3 L30.5 3 L30.3 5.5 L3.7 5.5 Z" fill="#a9cfe4"/>
<path d="M6.8 31.5 L27.2 31.5 L27 33.8 L7 33.8 Z" fill="#d8c0b8" opacity="0.8"/>
<circle cx="17" cy="17" r="5.6" stroke="#1e74c4" stroke-width="4.2" stroke-dasharray="8 3.7" fill="none" transform="rotate(-100 17 17)"/>
<circle cx="17" cy="17" r="5.6" stroke="#0c56a6" stroke-width="2" stroke-dasharray="8 3.7" fill="none" transform="rotate(-100 17 17)" opacity="0.5"/>
</svg>
<div class="t" style="left:-114.8px;width:300px;text-align:center;top:48.20px;font-size:9.6px;color:#ffffff;line-height:12px;transform:scaleX(0.927);transform-origin:center;text-shadow:0 0 2px rgba(0,0,0,.35);">Recycle Bin</div>
<svg class="r" style="left:14px;top:92px" width="36" height="36" viewBox="0 0 36 36">
<path d="M9 0 L27 0 L33 6 L33 32 L9 32 Z" fill="#8fd6f6" opacity="0.75"/>
<path d="M27 0 L27 6 L33 6 Z" fill="#c4ecfc" opacity="0.9"/>
<g transform="translate(10.5,23.5)" fill="#86cdee" opacity="0.95">
<circle r="7"/>
<g><rect x="-2" y="-9.5" width="4" height="19"/><rect x="-9.5" y="-2" width="19" height="4"/>
<rect x="-2" y="-9.5" width="4" height="19" transform="rotate(45)"/><rect x="-2" y="-9.5" width="4" height="19" transform="rotate(-45)"/></g>
<circle r="3.3" fill="#3f8cbf"/>
</g></svg>
<div class="t" style="left:-114.8px;width:300px;text-align:center;top:130.30px;font-size:9.6px;color:#ffffff;line-height:12px;transform:scaleX(0.981);transform-origin:center;text-shadow:0 0 2px rgba(0,0,0,.35);">desktop</div>
<svg class="r" style="left:14px;top:337px" width="36" height="36" viewBox="0 0 36 36">
<path d="M9 0 L27 0 L33 6 L33 32 L9 32 Z" fill="#8fd6f6" opacity="0.75"/>
<path d="M27 0 L27 6 L33 6 Z" fill="#c4ecfc" opacity="0.9"/>
<g transform="translate(10.5,23.5)" fill="#86cdee" opacity="0.95">
<circle r="7"/>
<g><rect x="-2" y="-9.5" width="4" height="19"/><rect x="-9.5" y="-2" width="19" height="4"/>
<rect x="-2" y="-9.5" width="4" height="19" transform="rotate(45)"/><rect x="-2" y="-9.5" width="4" height="19" transform="rotate(-45)"/></g>
<circle r="3.3" fill="#3f8cbf"/>
</g></svg>
<div class="t" style="left:-114.8px;width:300px;text-align:center;top:375.30px;font-size:9.6px;color:#ffffff;line-height:12px;transform:scaleX(0.981);transform-origin:center;text-shadow:0 0 2px rgba(0,0,0,.35);">desktop</div>
<svg class="r" style="left:15px;top:415px" width="40" height="40" viewBox="0 0 40 40">
<defs>
<linearGradient id="eg1" x1="0.1" y1="0.1" x2="0.9" y2="0.6"><stop offset="0" stop-color="#1ea6dc"/><stop offset="0.45" stop-color="#30c4c4"/><stop offset="1" stop-color="#5ee84a"/></linearGradient>
<linearGradient id="eg2" x1="0" y1="0" x2="0.3" y2="1"><stop offset="0" stop-color="#1f86d6"/><stop offset="1" stop-color="#1466bc"/></linearGradient>
<linearGradient id="eg3" x1="0" y1="0" x2="1" y2="0.5"><stop offset="0" stop-color="#0c3f8e"/><stop offset="1" stop-color="#1052a8"/></linearGradient>
</defs>
<circle cx="20.2" cy="20" r="19" fill="url(#eg1)"/>
<ellipse cx="21" cy="21.5" rx="5.2" ry="5.8" fill="#2ab4ec"/>
<path d="M1.2 20 C1.5 12 8 10 13 10.5 C18 11 21 13 22.5 15.8 C18 14.5 13.5 17 13 22 C12.5 30 19 37.5 27 38.5 C25 39 22.5 39.2 20.2 39 C9.5 38.5 1.2 30 1.2 20 Z" fill="url(#eg2)"/>
<path d="M13 22 C13.5 17 18 14.5 22.5 15.8 C19 16.5 16 20 16.5 23.5 C17 28.5 21.5 31.5 27.5 31.5 C31.5 31.5 35.5 29.5 39 26.5 C37.5 34 31 38.8 25 38.6 C18 38.3 12.5 30 13 22 Z" fill="url(#eg3)"/>
<rect x="1" y="30" width="10" height="10" fill="#ffffff"/>
<path d="M3.5 37.5 L8 33 M5.2 33 L8 33 L8 35.8" stroke="#3a6f9a" stroke-width="1.4" fill="none"/>
</svg>
<div class="t" style="left:-115.4px;width:300px;text-align:center;top:457.30px;font-size:9.6px;color:#ffffff;line-height:12px;transform:scaleX(1.017);transform-origin:center;text-shadow:0 0 2px rgba(0,0,0,.35);">Microsoft</div>
<div class="t" style="left:-115.4px;width:300px;text-align:center;top:469.30px;font-size:9.6px;color:#ffffff;line-height:12px;transform:scaleX(0.874);transform-origin:center;text-shadow:0 0 2px rgba(0,0,0,.35);">Edge</div>
<div class="r" style="left:201px;top:113px;width:892px;height:470px;background:#ffffff;box-shadow:0 4px 14px rgba(0,0,0,0.28);border:1px solid rgba(0,30,80,0.45);background-clip:padding-box;box-sizing:border-box;"></div>
<svg class="r" style="left:207px;top:118px" width="15" height="11" viewBox="0 0 15 11"><rect x="1" y="0" width="2.6" height="2.4" fill="#2b7fd4"/><rect x="4.2" y="0" width="2.6" height="2.4" fill="#2b7fd4"/><rect x="1" y="3" width="2.6" height="2.4" fill="#2b7fd4"/><rect x="4.2" y="3" width="2.6" height="2.4" fill="#2b7fd4"/><rect x="1" y="7" width="13" height="3.2" fill="#222"/><rect x="2" y="8.5" width="2" height="1" fill="#3c3"/></svg>
<div class="r" style="left:227px;top:120px;width:1px;height:10px;background:#b0b0b0;"></div>
<svg class="r" style="left:235px;top:118px" width="12" height="15" viewBox="0 0 12 15"><path d="M0.5 0.5 L8 0.5 L11.5 4 L11.5 14.5 L0.5 14.5 Z" fill="#fff" stroke="#8a8a8a"/><path d="M2.5 8.5 L5 11 L9.5 5" stroke="#d8503a" stroke-width="1.3" fill="none"/></svg>
<svg class="r" style="left:251px;top:119px" width="14" height="12" viewBox="0 0 14 12"><path d="M0 1 L5 1 L6.5 2.5 L14 2.5 L14 12 L0 12 Z" fill="#e8b830"/><rect x="0" y="4" width="14" height="8" fill="#f8d56a"/></svg>
<svg class="r" style="left:269px;top:123px" width="8" height="8" viewBox="0 0 8 8"><rect x="1" y="0" width="6" height="1.2" fill="#222"/><path d="M1 3 L7 3 L4 6.5 Z" fill="#222"/></svg>
<div class="r" style="left:281px;top:120px;width:1px;height:10px;background:#b0b0b0;"></div>
<div class="t" style="left:288.20px;top:119.50px;font-size:9.8px;color:#a0a0a0;line-height:12px;transform:scaleX(0.914);transform-origin:left;">Local Disk (C:)</div>
<div class="r" style="left:998.5px;top:125px;width:8.5px;height:1px;background:#a0a0a0;"></div>
<div class="r" style="left:1034px;top:120px;width:9px;height:9px;background:transparent;border:1px solid #9a9a9a;box-sizing:border-box;"></div>
<svg class="r" style="left:1070px;top:120px" width="10" height="10" viewBox="0 0 10 10"><path d="M0.5 0.5 L9.5 9.5 M9.5 0.5 L0.5 9.5" stroke="#9a9a9a" stroke-width="1.1"/></svg>
<div class="r" style="left:201px;top:138px;width:45px;height:17.5px;background:#0c5fa8;"></div>
<div class="t" style="left:74.1px;width:300px;text-align:center;top:141.00px;font-size:9.8px;color:#ffffff;line-height:12px;transform:scaleX(0.902);transform-origin:center;">File</div>
<div class="t" style="left:256.97px;top:141.00px;font-size:9.8px;color:#333;line-height:12px;transform:scaleX(0.889);transform-origin:left;">Home</div>
<div class="t" style="left:303.99px;top:141.00px;font-size:9.8px;color:#333;line-height:12px;transform:scaleX(0.851);transform-origin:left;">Share</div>
<div class="t" style="left:349.43px;top:141.00px;font-size:9.8px;color:#333;line-height:12px;transform:scaleX(0.949);transform-origin:left;">View</div>
<svg class="r" style="left:1063.5px;top:144.3px" width="8" height="5" viewBox="0 0 8 5"><path d="M0.6 0.6 L4 4 L7.4 0.6" stroke="#9a9a9a" stroke-width="1.1" fill="none"/></svg>
<svg class="r" style="left:1078px;top:140px" width="13" height="13" viewBox="0 0 13 13"><circle cx="6.5" cy="6.5" r="6.3" fill="#1a64b0"/><text x="6.5" y="10.2" font-size="10" font-weight="bold" text-anchor="middle" fill="#fff" font-family="Liberation Sans">?</text></svg>
<div class="r" style="left:202px;top:156px;width:890px;height:1px;background:#e6e6e6;"></div>
<svg class="r" style="left:212px;top:172px" width="12" height="11" viewBox="0 0 12 11"><path d="M11 5.5 L1 5.5 M5.5 1 L1 5.5 L5.5 10" stroke="#707070" stroke-width="1.1" fill="none"/></svg>
<svg class="r" style="left:240px;top:172px" width="12" height="11" viewBox="0 0 12 11"><path d="M1 5.5 L11 5.5 M6.5 1 L11 5.5 L6.5 10" stroke="#b8b8b8" stroke-width="1.2" fill="none"/></svg>
<svg class="r" style="left:266px;top:175px" width="8" height="5" viewBox="0 0 8 5"><path d="M0.5 0.5 L4 4 L7.5 0.5" stroke="#6a6a6a" stroke-width="1.1" fill="none"/></svg>
<svg class="r" style="left:287px;top:172px" width="12" height="12" viewBox="0 0 12 12"><path d="M6 11.5 L6 1 M1.5 5.5 L6 1 L10.5 5.5" stroke="#666" stroke-width="1.1" fill="none"/></svg>
<div class="r" style="left:310px;top:165px;width:604px;height:26.5px;background:#fff;border:1px solid #d9d9d9;box-sizing:border-box;"></div>
<svg class="r" style="left:317px;top:171px" width="14" height="10" viewBox="0 0 14 10"><rect x="0.5" y="0" width="2.4" height="2.2" fill="#2b7fd4"/><rect x="3.4" y="0" width="2.4" height="2.2" fill="#2b7fd4"/><rect x="0.5" y="2.8" width="2.4" height="2.2" fill="#2b7fd4"/><rect x="3.4" y="2.8" width="2.4" height="2.2" fill="#2b7fd4"/><rect x="1" y="6.3" width="12.5" height="3.2" fill="#222"/></svg>
<svg class="r" style="left:335px;top:174px" width="5" height="8" viewBox="0 0 5 8"><path d="M0.8 0.8 L4 4 L0.8 7.2" stroke="#555" stroke-width="1.1" fill="none"/></svg>
<div class="t" style="left:346.98px;top:171.50px;font-size:9.8px;color:#1e1e1e;line-height:12px;transform:scaleX(0.861);transform-origin:left;">This PC</div>
<svg class="r" style="left:385px;top:174px" width="5" height="8" viewBox="0 0 5 8"><path d="M0.8 0.8 L4 4 L0.8 7.2" stroke="#555" stroke-width="1.1" fill="none"/></svg>
<div class="t" style="left:396.45px;top:171.50px;font-size:9.8px;color:#1e1e1e;line-height:12px;transform:scaleX(0.912);transform-origin:left;">Local Disk (C:)</div>
<svg class="r" style="left:869px;top:175px" width="9" height="5" viewBox="0 0 9 5"><path d="M0.5 0.5 L4.5 4.5 L8.5 0.5" stroke="#6a6a6a" stroke-width="1.1" fill="none"/></svg>
<svg class="r" style="left:894px;top:172px" width="11" height="11" viewBox="0 0 11 11"><path d="M9 2.5 A4.3 4.3 0 1 0 9.8 6.5" stroke="#666" stroke-width="1.1" fill="none"/><path d="M6.8 0.6 L10 0.6 L10 3.8 Z" fill="#666"/></svg>
<div class="r" style="left:923px;top:165px;width:159px;height:26.5px;background:#fff;border:1px solid #d9d9d9;box-sizing:border-box;"></div>
<div class="t" style="left:929.85px;top:171.50px;font-size:9.8px;color:#6d6d6d;line-height:12px;transform:scaleX(0.913);transform-origin:left;">Search Local Disk (C:)</div>
<svg class="r" style="left:1062px;top:172px" width="11" height="11" viewBox="0 0 11 11"><circle cx="6.5" cy="4.5" r="3.3" stroke="#444" stroke-width="1.3" fill="none"/><path d="M4.2 6.8 L1 10" stroke="#444" stroke-width="1.6"/></svg>
<svg class="r" style="left:207px;top:221px" width="9" height="6" viewBox="0 0 9 6"><path d="M0.8 0.8 L4.5 4.5 L8.2 0.8" stroke="#444" stroke-width="1.3" fill="none"/></svg>
<svg class="r" style="left:224px;top:217px" width="12" height="12" viewBox="0 0 12 12"><path d="M6 0.5 L7.6 4.2 L11.6 4.5 L8.6 7.1 L9.5 11 L6 8.9 L2.5 11 L3.4 7.1 L0.4 4.5 L4.4 4.2 Z" fill="#f2b90c"/></svg>
<div class="t" style="left:240.45px;top:217.20px;font-size:9.8px;color:#1e1e1e;line-height:12px;transform:scaleX(0.916);transform-origin:left;">Quick access</div>
<svg class="r" style="left:230px;top:244px" width="14" height="11" viewBox="0 0 14 11"><rect x="0" y="0.5" width="13.5" height="9.5" rx="0.6" fill="#1c9ee6"/><rect x="0" y="0.5" width="13.5" height="3" fill="#4cc0f4"/><rect x="1.2" y="2" width="1.3" height="1" fill="#fff"/><rect x="1.2" y="4" width="1.3" height="1" fill="#fff"/></svg>
<div class="t" style="left:246.75px;top:243.50px;font-size:9.8px;color:#1e1e1e;line-height:12px;transform:scaleX(0.923);transform-origin:left;">Desktop</div>
<svg class="r" style="left:231px;top:267px" width="12" height="14" viewBox="0 0 12 14"><path d="M6 1 L6 9.5 M2 6 L6 10 L10 6" stroke="#1fa672" stroke-width="1.3" fill="none"/><rect x="0.5" y="12" width="11" height="1.3" fill="#1fa672"/></svg>
<div class="t" style="left:246.73px;top:268.70px;font-size:9.8px;color:#1e1e1e;line-height:12px;transform:scaleX(0.955);transform-origin:left;">Downloads</div>
<svg class="r" style="left:232px;top:293px" width="11" height="14" viewBox="0 0 11 14"><rect x="0.5" y="0.5" width="10" height="13" fill="#c4d2e4" stroke="#8899b0" stroke-width="0.8"/><rect x="2.5" y="3" width="6" height="4" fill="#fff"/></svg>
<div class="t" style="left:246.72px;top:294.00px;font-size:9.8px;color:#1e1e1e;line-height:12px;transform:scaleX(0.962);transform-origin:left;">Documents</div>
<svg class="r" style="left:314px;top:244.5px" width="9" height="10" viewBox="0 0 9 10"><path d="M5.5 0.5 L8.5 3.5 L7 4 L5 6.5 L5.2 8 L1 3.8 L2.5 3.8 L5 1.8 Z" fill="#8a8a8a"/><path d="M3 6 L0.5 8.5" stroke="#8a8a8a" stroke-width="1"/></svg>
<svg class="r" style="left:314px;top:269.7px" width="9" height="10" viewBox="0 0 9 10"><path d="M5.5 0.5 L8.5 3.5 L7 4 L5 6.5 L5.2 8 L1 3.8 L2.5 3.8 L5 1.8 Z" fill="#8a8a8a"/><path d="M3 6 L0.5 8.5" stroke="#8a8a8a" stroke-width="1"/></svg>
<svg class="r" style="left:314px;top:295px" width="9" height="10" viewBox="0 0 9 10"><path d="M5.5 0.5 L8.5 3.5 L7 4 L5 6.5 L5.2 8 L1 3.8 L2.5 3.8 L5 1.8 Z" fill="#8a8a8a"/><path d="M3 6 L0.5 8.5" stroke="#8a8a8a" stroke-width="1"/></svg>
<div class="r" style="left:202px;top:321px;width:124px;height:21.5px;background:#d4d4d4;"></div>
<svg class="r" style="left:209px;top:327.5px" width="6" height="9" viewBox="0 0 6 9"><path d="M0.8 0.8 L4.5 4.5 L0.8 8.2" stroke="#8a8a8a" stroke-width="1.1" fill="none"/></svg>
<svg class="r" style="left:223px;top:325px" width="15" height="14" viewBox="0 0 15 14"><rect x="0.5" y="0.5" width="13.5" height="10" fill="#26b0e6"/><rect x="0.5" y="0.5" width="13.5" height="4" fill="#5fd0f5"/><rect x="5.5" y="10.5" width="3.5" height="1.8" fill="#666"/><rect x="3.5" y="12.3" width="7.5" height="1" fill="#888"/></svg>
<div class="t" style="left:240.78px;top:325.00px;font-size:9.8px;color:#1e1e1e;line-height:12px;transform:scaleX(0.867);transform-origin:left;">This PC</div>
<svg class="r" style="left:209px;top:359px" width="6" height="9" viewBox="0 0 6 9"><path d="M0.8 0.8 L4.5 4.5 L0.8 8.2" stroke="#8a8a8a" stroke-width="1.1" fill="none"/></svg>
<svg class="r" style="left:223px;top:356px" width="15" height="14" viewBox="0 0 15 14"><rect x="2.5" y="2.5" width="12" height="9" fill="#26a5d8"/><rect x="0" y="0" width="6" height="5" fill="#1e8cc4"/><rect x="1.5" y="1.2" width="3" height="2.4" fill="#9de0f8"/><rect x="7.5" y="11.5" width="2.5" height="1.6" fill="#666"/><rect x="5" y="13" width="7.5" height="1" fill="#888"/></svg>
<div class="t" style="left:240.72px;top:356.50px;font-size:9.8px;color:#1e1e1e;line-height:12px;transform:scaleX(0.965);transform-origin:left;">Network</div>
<div class="t" style="left:352.33px;top:204.30px;font-size:9.8px;color:#4d6082;line-height:12px;transform:scaleX(0.952);transform-origin:left;">Name</div>
<svg class="r" style="left:442px;top:200px" width="8" height="5" viewBox="0 0 8 5"><path d="M0.5 4.5 L4 1 L7.5 4.5" stroke="#9a9a9a" stroke-width="1" fill="none"/></svg>
<div class="r" style="left:544.5px;top:201px;width:1px;height:20px;background:linear-gradient(#fff,#e5e5e5 30%,#e5e5e5 70%,#fff);"></div>
<div class="r" style="left:659px;top:201px;width:1px;height:20px;background:linear-gradient(#fff,#e5e5e5 30%,#e5e5e5 70%,#fff);"></div>
<div class="r" style="left:753.6px;top:201px;width:1px;height:20px;background:linear-gradient(#fff,#e5e5e5 30%,#e5e5e5 70%,#fff);"></div>
<div class="r" style="left:817.8px;top:201px;width:1px;height:20px;background:linear-gradient(#fff,#e5e5e5 30%,#e5e5e5 70%,#fff);"></div>
<div class="t" style="left:548.91px;top:204.30px;font-size:9.8px;color:#4d6082;line-height:12px;transform:scaleX(0.979);transform-origin:left;">Date modified</div>
<div class="t" style="left:663.77px;top:204.30px;font-size:9.8px;color:#4d6082;line-height:12px;transform:scaleX(0.875);transform-origin:left;">Type</div>
<div class="t" style="left:759.02px;top:204.30px;font-size:9.8px;color:#4d6082;line-height:12px;transform:scaleX(0.797);transform-origin:left;">Size</div>
<div class="r" style="left:340px;top:420.2px;width:474px;height:20.8px;background:#d4d4d4;"></div>
<svg class="r" style="left:343px;top:229.20000000000002px" width="13" height="11" viewBox="0 0 13 11"><g opacity="0.55"><path d="M0 0.5 L4.5 0.5 L6 2 L12.5 2 L12.5 10.5 L0 10.5 Z" fill="#e6b32e"/><rect x="0" y="3" width="12.5" height="7.5" fill="#fad566"/></g></svg>
<div class="t" style="left:358.79px;top:228.40px;font-size:9.8px;color:#1e1e1e;line-height:12px;transform:scaleX(0.847);transform-origin:left;">$RECYCLE.BIN</div>
<div class="t" style="left:548.94px;top:228.40px;font-size:9.8px;color:#6d6d6d;line-height:12px;transform:scaleX(0.931);transform-origin:left;">1/2/2022 2:04 PM</div>
<div class="t" style="left:663.72px;top:228.40px;font-size:9.8px;color:#6d6d6d;line-height:12px;transform:scaleX(0.964);transform-origin:left;">File folder</div>
<svg class="r" style="left:343px;top:253.8px" width="13" height="11" viewBox="0 0 13 11"><g opacity="0.55"><path d="M0 0.5 L4.5 0.5 L6 2 L12.5 2 L12.5 10.5 L0 10.5 Z" fill="#e6b32e"/><rect x="0" y="3" width="12.5" height="7.5" fill="#fad566"/></g><rect x="0" y="5.5" width="5" height="5" fill="#fff"/><path d="M1 9.5 L4 6.5 M2.2 6.5 L4 6.5 L4 8.3" stroke="#2a7bd0" stroke-width="0.9" fill="none"/></svg>
<div class="t" style="left:358.73px;top:253.00px;font-size:9.8px;color:#1e1e1e;line-height:12px;transform:scaleX(0.955);transform-origin:left;">Documents and Settings</div>
<div class="t" style="left:548.93px;top:253.00px;font-size:9.8px;color:#6d6d6d;line-height:12px;transform:scaleX(0.946);transform-origin:left;">4/23/2019 6:41 AM</div>
<div class="t" style="left:663.72px;top:253.00px;font-size:9.8px;color:#6d6d6d;line-height:12px;transform:scaleX(0.964);transform-origin:left;">File folder</div>
<svg class="r" style="left:343px;top:278.40000000000003px" width="13" height="11" viewBox="0 0 13 11"><g opacity="1"><path d="M0 0.5 L4.5 0.5 L6 2 L12.5 2 L12.5 10.5 L0 10.5 Z" fill="#e6b32e"/><rect x="0" y="3" width="12.5" height="7.5" fill="#fad566"/></g></svg>
<div class="t" style="left:358.74px;top:277.60px;font-size:9.8px;color:#1e1e1e;line-height:12px;transform:scaleX(0.928);transform-origin:left;">PerfLogs</div>
<div class="t" style="left:548.93px;top:277.60px;font-size:9.8px;color:#6d6d6d;line-height:12px;transform:scaleX(0.946);transform-origin:left;">5/22/2021 3:40 AM</div>
<div class="t" style="left:663.72px;top:277.60px;font-size:9.8px;color:#6d6d6d;line-height:12px;transform:scaleX(0.964);transform-origin:left;">File folder</div>
<svg class="r" style="left:343px;top:303.00000000000006px" width="13" height="11" viewBox="0 0 13 11"><g opacity="1"><path d="M0 0.5 L4.5 0.5 L6 2 L12.5 2 L12.5 10.5 L0 10.5 Z" fill="#e6b32e"/><rect x="0" y="3" width="12.5" height="7.5" fill="#fad566"/></g></svg>
<div class="t" style="left:358.75px;top:302.20px;font-size:9.8px;color:#1e1e1e;line-height:12px;transform:scaleX(0.920);transform-origin:left;">Program Files</div>
<div class="t" style="left:548.93px;top:302.20px;font-size:9.8px;color:#6d6d6d;line-height:12px;transform:scaleX(0.946);transform-origin:left;">5/22/2021 3:40 AM</div>
<div class="t" style="left:663.72px;top:302.20px;font-size:9.8px;color:#6d6d6d;line-height:12px;transform:scaleX(0.964);transform-origin:left;">File folder</div>
<svg class="r" style="left:343px;top:327.6px" width="13" height="11" viewBox="0 0 13 11"><g opacity="0.55"><path d="M0 0.5 L4.5 0.5 L6 2 L12.5 2 L12.5 10.5 L0 10.5 Z" fill="#e6b32e"/><rect x="0" y="3" width="12.5" height="7.5" fill="#fad566"/></g></svg>
<div class="t" style="left:358.75px;top:326.80px;font-size:9.8px;color:#1e1e1e;line-height:12px;transform:scaleX(0.920);transform-origin:left;">Program Files (x86)</div>
<div class="t" style="left:548.93px;top:326.80px;font-size:9.8px;color:#6d6d6d;line-height:12px;transform:scaleX(0.946);transform-origin:left;">5/22/2021 3:40 AM</div>
<div class="t" style="left:663.72px;top:326.80px;font-size:9.8px;color:#6d6d6d;line-height:12px;transform:scaleX(0.964);transform-origin:left;">File folder</div>
<svg class="r" style="left:343px;top:352.2px" width="13" height="11" viewBox="0 0 13 11"><g opacity="0.55"><path d="M0 0.5 L4.5 0.5 L6 2 L12.5 2 L12.5 10.5 L0 10.5 Z" fill="#e6b32e"/><rect x="0" y="3" width="12.5" height="7.5" fill="#fad566"/></g></svg>
<div class="t" style="left:358.75px;top:351.40px;font-size:9.8px;color:#1e1e1e;line-height:12px;transform:scaleX(0.920);transform-origin:left;">Recovery</div>
<div class="t" style="left:548.93px;top:351.40px;font-size:9.8px;color:#6d6d6d;line-height:12px;transform:scaleX(0.946);transform-origin:left;">5/22/2021 3:40 AM</div>
<div class="t" style="left:663.72px;top:351.40px;font-size:9.8px;color:#6d6d6d;line-height:12px;transform:scaleX(0.964);transform-origin:left;">File folder</div>
<svg class="r" style="left:343px;top:376.8px" width="13" height="11" viewBox="0 0 13 11"><g opacity="1"><path d="M0 0.5 L4.5 0.5 L6 2 L12.5 2 L12.5 10.5 L0 10.5 Z" fill="#e6b32e"/><rect x="0" y="3" width="12.5" height="7.5" fill="#fad566"/></g></svg>
<div class="t" style="left:358.75px;top:376.00px;font-size:9.8px;color:#1e1e1e;line-height:12px;transform:scaleX(0.920);transform-origin:left;">System Volume Information</div>
<div class="t" style="left:548.93px;top:376.00px;font-size:9.8px;color:#6d6d6d;line-height:12px;transform:scaleX(0.946);transform-origin:left;">5/22/2021 3:40 AM</div>
<div class="t" style="left:663.72px;top:376.00px;font-size:9.8px;color:#6d6d6d;line-height:12px;transform:scaleX(0.964);transform-origin:left;">File folder</div>
<svg class="r" style="left:343px;top:401.40000000000003px" width="13" height="11" viewBox="0 0 13 11"><g opacity="1"><path d="M0 0.5 L4.5 0.5 L6 2 L12.5 2 L12.5 10.5 L0 10.5 Z" fill="#e6b32e"/><rect x="0" y="3" width="12.5" height="7.5" fill="#fad566"/></g></svg>
<div class="t" style="left:358.80px;top:400.60px;font-size:9.8px;color:#1e1e1e;line-height:12px;transform:scaleX(0.832);transform-origin:left;">Users</div>
<div class="t" style="left:548.93px;top:400.60px;font-size:9.8px;color:#6d6d6d;line-height:12px;transform:scaleX(0.946);transform-origin:left;">5/22/2021 3:40 AM</div>
<div class="t" style="left:663.72px;top:400.60px;font-size:9.8px;color:#6d6d6d;line-height:12px;transform:scaleX(0.964);transform-origin:left;">File folder</div>
<svg class="r" style="left:343px;top:426.00000000000006px" width="13" height="11" viewBox="0 0 13 11"><g opacity="1"><path d="M0 0.5 L4.5 0.5 L6 2 L12.5 2 L12.5 10.5 L0 10.5 Z" fill="#e6b32e"/><rect x="0" y="3" width="12.5" height="7.5" fill="#fad566"/></g></svg>
<div class="t" style="left:358.75px;top:425.20px;font-size:9.8px;color:#1e1e1e;line-height:12px;transform:scaleX(0.920);transform-origin:left;">Windows</div>
<div class="t" style="left:548.93px;top:425.20px;font-size:9.8px;color:#6d6d6d;line-height:12px;transform:scaleX(0.946);transform-origin:left;">5/22/2021 3:40 AM</div>
<div class="t" style="left:663.72px;top:425.20px;font-size:9.8px;color:#6d6d6d;line-height:12px;transform:scaleX(0.964);transform-origin:left;">File folder</div>
<svg class="r" style="left:343px;top:449.6px" width="13" height="12" viewBox="0 0 13 12"><rect x="0.5" y="1.5" width="12" height="9" fill="#fff" stroke="#999"/><rect x="0.5" y="1.5" width="12" height="2" fill="#ccc"/><path d="M5 5 L8 8" stroke="#999" stroke-width="1.2"/></svg>
<div class="t" style="left:358.75px;top:449.80px;font-size:9.8px;color:#1e1e1e;line-height:12px;transform:scaleX(0.920);transform-origin:left;">autoexec.bat</div>
<div class="t" style="left:548.93px;top:449.80px;font-size:9.8px;color:#6d6d6d;line-height:12px;transform:scaleX(0.946);transform-origin:left;">5/22/2021 3:40 AM</div>
<div class="t" style="left:663.74px;top:449.80px;font-size:9.8px;color:#6d6d6d;line-height:12px;transform:scaleX(0.940);transform-origin:left;">Windows Batch File</div>
<div class="t" style="right:468.29px;top:449.80px;font-size:9.8px;color:#6d6d6d;line-height:12px;transform:scaleX(0.842);transform-origin:right;">1 KB</div>
<svg class="r" style="left:344px;top:473.2px" width="11" height="14" viewBox="0 0 11 14"><path d="M0.5 0.5 L7 0.5 L10.5 4 L10.5 13.5 L0.5 13.5 Z" fill="#fff" stroke="#a0a0a0"/><path d="M3.5 6 L7 9.5" stroke="#a8a8a8" stroke-width="1.2"/></svg>
<div class="t" style="left:358.75px;top:474.40px;font-size:9.8px;color:#1e1e1e;line-height:12px;transform:scaleX(0.920);transform-origin:left;">config.sys</div>
<div class="t" style="left:548.93px;top:474.40px;font-size:9.8px;color:#6d6d6d;line-height:12px;transform:scaleX(0.946);transform-origin:left;">5/22/2021 3:40 AM</div>
<div class="t" style="left:663.74px;top:474.40px;font-size:9.8px;color:#6d6d6d;line-height:12px;transform:scaleX(0.935);transform-origin:left;">System file</div>
<div class="t" style="right:468.29px;top:474.40px;font-size:9.8px;color:#6d6d6d;line-height:12px;transform:scaleX(0.842);transform-origin:right;">1 KB</div>
<svg class="r" style="left:344px;top:497.8px" width="11" height="14" viewBox="0 0 11 14"><path d="M0.5 0.5 L7 0.5 L10.5 4 L10.5 13.5 L0.5 13.5 Z" fill="#fff" stroke="#a0a0a0"/></svg>
<div class="t" style="left:358.75px;top:499.00px;font-size:9.8px;color:#1e1e1e;line-height:12px;transform:scaleX(0.920);transform-origin:left;">DumpStack.log.tmp</div>
<div class="t" style="left:548.93px;top:499.00px;font-size:9.8px;color:#6d6d6d;line-height:12px;transform:scaleX(0.946);transform-origin:left;">5/22/2021 3:40 AM</div>
<div class="t" style="left:663.76px;top:499.00px;font-size:9.8px;color:#6d6d6d;line-height:12px;transform:scaleX(0.902);transform-origin:left;">TMP File</div>
<div class="t" style="right:468.30px;top:499.00px;font-size:9.8px;color:#6d6d6d;line-height:12px;transform:scaleX(0.835);transform-origin:right;">12 KB</div>
<svg class="r" style="left:344px;top:522.4px" width="11" height="14" viewBox="0 0 11 14"><path d="M0.5 0.5 L7 0.5 L10.5 4 L10.5 13.5 L0.5 13.5 Z" fill="#fff" stroke="#a0a0a0"/><path d="M3.5 6 L7 9.5" stroke="#a8a8a8" stroke-width="1.2"/></svg>
<div class="t" style="left:358.75px;top:523.60px;font-size:9.8px;color:#1e1e1e;line-height:12px;transform:scaleX(0.920);transform-origin:left;">pagefile.sys</div>
<div class="t" style="left:548.93px;top:523.60px;font-size:9.8px;color:#6d6d6d;line-height:12px;transform:scaleX(0.946);transform-origin:left;">5/22/2021 3:40 AM</div>
<div class="t" style="left:663.74px;top:523.60px;font-size:9.8px;color:#6d6d6d;line-height:12px;transform:scaleX(0.935);transform-origin:left;">System file</div>
<div class="t" style="right:468.28px;top:523.60px;font-size:9.8px;color:#6d6d6d;line-height:12px;transform:scaleX(0.867);transform-origin:right;">1,179,648 KB</div>
<svg class="r" style="left:344px;top:547.0px" width="11" height="14" viewBox="0 0 11 14"><path d="M0.5 0.5 L7 0.5 L10.5 4 L10.5 13.5 L0.5 13.5 Z" fill="#fff" stroke="#a0a0a0"/><path d="M3.5 6 L7 9.5" stroke="#a8a8a8" stroke-width="1.2"/></svg>
<div class="t" style="left:358.75px;top:548.20px;font-size:9.8px;color:#1e1e1e;line-height:12px;transform:scaleX(0.920);transform-origin:left;">swapfile.sys</div>
<div class="t" style="left:548.93px;top:548.20px;font-size:9.8px;color:#6d6d6d;line-height:12px;transform:scaleX(0.946);transform-origin:left;">5/22/2021 3:40 AM</div>
<div class="t" style="left:663.74px;top:548.20px;font-size:9.8px;color:#6d6d6d;line-height:12px;transform:scaleX(0.935);transform-origin:left;">System file</div>
<div class="t" style="right:468.28px;top:548.20px;font-size:9.8px;color:#6d6d6d;line-height:12px;transform:scaleX(0.873);transform-origin:right;">262,144 KB</div>
<div class="r" style="left:1081px;top:200px;width:12px;height:364px;background:#f0f0f0;"></div>
<div class="r" style="left:1081px;top:215px;width:12px;height:336px;background:#cdcdcd;"></div>
<svg class="r" style="left:1083px;top:204px" width="8" height="6" viewBox="0 0 8 6"><path d="M0.8 4.8 L4 1.5 L7.2 4.8" stroke="#555" stroke-width="1.4" fill="none"/></svg>
<svg class="r" style="left:1083px;top:555px" width="8" height="6" viewBox="0 0 8 6"><path d="M0.8 1.2 L4 4.5 L7.2 1.2" stroke="#555" stroke-width="1.4" fill="none"/></svg>
<div class="t" style="left:212.84px;top:567.80px;font-size:9.8px;color:#333;line-height:12px;transform:scaleX(0.937);transform-origin:left;">14 items</div>
<div class="t" style="left:264.14px;top:567.80px;font-size:9.8px;color:#333;line-height:12px;transform:scaleX(0.941);transform-origin:left;">1 item selected</div>
<div class="r" style="left:1055px;top:564.5px;width:17.5px;height:18.5px;background:#cce8ff;border:1px solid #99d1ff;box-sizing:border-box;"></div>
<svg class="r" style="left:1060px;top:570px" width="10" height="9" viewBox="0 0 10 9"><rect x="0" y="0.3" width="9.5" height="1.3" fill="#444"/><rect x="0" y="2.6" width="9.5" height="1.3" fill="#444"/><rect x="0" y="4.9" width="9.5" height="1.3" fill="#444"/><rect x="0" y="7.2" width="9.5" height="1.3" fill="#444"/></svg>
<svg class="r" style="left:1076px;top:568px" width="11" height="11" viewBox="0 0 11 11"><rect x="0.6" y="0.6" width="9" height="8.5" fill="none" stroke="#444" stroke-width="1.2"/><rect x="0" y="8.5" width="10.2" height="1.6" fill="#444"/></svg>
<div class="r" style="left:384px;top:294px;width:289px;height:381px;background:#eeeeee;box-shadow:0 5px 18px rgba(0,0,0,0.32);border:1px solid #7a7a7a;box-sizing:border-box;"></div>
<div class="r" style="left:385px;top:295px;width:287px;height:23.5px;background:#ffffff;"></div>
<svg class="r" style="left:392px;top:301px" width="12" height="10" viewBox="0 0 12 10"><path d="M0 0 L4.5 0 L6 1.5 L12 1.5 L12 10 L0 10 Z" fill="#e6b32e"/><rect x="0" y="2.5" width="12" height="7.5" fill="#fad566"/></svg>
<div class="t" style="left:407.92px;top:300.00px;font-size:9.6px;color:#1e1e1e;line-height:12px;transform:scaleX(0.972);transform-origin:left;">Windows Properties</div>
<svg class="r" style="left:655px;top:301px" width="10" height="10" viewBox="0 0 10 10"><path d="M0.5 0.5 L9.5 9.5 M9.5 0.5 L0.5 9.5" stroke="#222" stroke-width="1.1"/></svg>
<div class="r" style="left:431.4px;top:326.7px;width:151.3px;height:14px;background:#ececec;border:1px solid #dcdcdc;border-bottom:none;box-sizing:border-box;"></div>
<div class="r" style="left:467.5px;top:326.7px;width:41px;height:14px;background:#dce6f2;border:1px solid #c5d5e8;border-bottom:none;box-sizing:border-box;"></div>
<div class="r" style="left:391px;top:340.4px;width:274px;height:305px;background:#ffffff;border:1px solid #d9d9d9;box-sizing:border-box;"></div>
<div class="r" style="left:391.9px;top:324.5px;width:39.5px;height:17px;background:#ffffff;border:1px solid #d9d9d9;border-bottom:none;box-sizing:border-box;"></div>
<div class="t" style="left:395.18px;top:326.00px;font-size:9.6px;color:#1e1e1e;line-height:12px;transform:scaleX(0.870);transform-origin:left;">General</div>
<div class="t" style="left:434.31px;top:327.60px;font-size:10px;color:#1e1e1e;line-height:12px;transform:scaleX(0.824);transform-origin:left;">Sharing</div>
<div class="t" style="left:473.01px;top:327.60px;font-size:10px;color:#1e1e1e;line-height:12px;transform:scaleX(0.825);transform-origin:left;">Security</div>
<div class="t" style="left:512.50px;top:327.60px;font-size:10px;color:#1e1e1e;line-height:12px;transform:scaleX(0.827);transform-origin:left;">Previous Versions</div>
<svg class="r" style="left:403px;top:353px" width="23" height="19" viewBox="0 0 23 19"><path d="M0 0.5 L8 0.5 L10 3 L23 3 L23 19 L0 19 Z" fill="#e2ab2a"/><rect x="0" y="4.5" width="23" height="14.5" fill="#f9d466"/><rect x="0" y="4.5" width="23" height="1" fill="#fbe08a"/></svg>
<div class="r" style="left:459.8px;top:356.3px;width:195px;height:17.5px;background:#fff;border:1px solid #c8c8c8;box-sizing:border-box;"></div>
<div class="t" style="left:461.49px;top:358.50px;font-size:10px;color:#8a8a8a;line-height:12px;transform:scaleX(0.848);transform-origin:left;">Windows</div>
<div class="r" style="left:401.3px;top:383px;width:253px;height:1px;background:#a8a8a8;border-bottom:1px solid #fff;"></div>
<div class="t" style="left:401.70px;top:393.50px;font-size:10px;color:#1e1e1e;line-height:12px;transform:scaleX(0.830);transform-origin:left;">Type:</div>
<div class="t" style="left:459.53px;top:393.50px;font-size:10px;color:#1e1e1e;line-height:12px;transform:scaleX(0.790);transform-origin:left;">File folder</div>
<div class="t" style="left:401.70px;top:414.40px;font-size:10px;color:#1e1e1e;line-height:12px;transform:scaleX(0.838);transform-origin:left;">Location:</div>
<div class="t" style="left:459.44px;top:414.40px;font-size:10px;color:#1e1e1e;line-height:12px;transform:scaleX(0.939);transform-origin:left;">C:\</div>
<div class="t" style="left:401.72px;top:434.80px;font-size:10px;color:#1e1e1e;line-height:12px;transform:scaleX(0.796);transform-origin:left;">Size:</div>
<div class="t" style="left:459.50px;top:434.80px;font-size:10px;color:#1e1e1e;line-height:12px;transform:scaleX(0.841);transform-origin:left;">5.08 GB (5,456,620,682 bytes)</div>
<div class="t" style="left:401.70px;top:455.20px;font-size:10px;color:#1e1e1e;line-height:12px;transform:scaleX(0.829);transform-origin:left;">Size on disk:</div>
<div class="t" style="left:459.50px;top:455.20px;font-size:10px;color:#1e1e1e;line-height:12px;transform:scaleX(0.841);transform-origin:left;">5.15 GB (5,540,171,776 bytes)</div>
<div class="t" style="left:401.72px;top:475.80px;font-size:10px;color:#1e1e1e;line-height:12px;transform:scaleX(0.805);transform-origin:left;">Contains:</div>
<div class="t" style="left:459.50px;top:475.80px;font-size:10px;color:#1e1e1e;line-height:12px;transform:scaleX(0.830);transform-origin:left;">46,463 Files, 7,711 Folders</div>
<div class="r" style="left:401.6px;top:496.3px;width:252px;height:1px;background:#a8a8a8;"></div>
<div class="t" style="left:401.30px;top:505.70px;font-size:10px;color:#1e1e1e;line-height:12px;transform:scaleX(0.826);transform-origin:left;">Created:</div>
<div class="t" style="left:459.49px;top:505.70px;font-size:10px;color:#1e1e1e;line-height:12px;transform:scaleX(0.851);transform-origin:left;">Saturday, May 22, 2021, 3:32:56 AM</div>
<div class="r" style="left:401.6px;top:527.6px;width:252px;height:1px;background:#a8a8a8;"></div>
<div class="t" style="left:401.31px;top:537.80px;font-size:10px;color:#1e1e1e;line-height:12px;transform:scaleX(0.820);transform-origin:left;">Attributes:</div>
<div class="r" style="left:459.6px;top:539.5px;width:10.5px;height:10px;background:#fff;border:1px solid #333;box-sizing:border-box;"></div>
<div class="r" style="left:462.1px;top:542px;width:5.5px;height:5px;background:#222;"></div>
<div class="t" style="left:472.11px;top:537.80px;font-size:10px;color:#1e1e1e;line-height:12px;transform:scaleX(0.822);transform-origin:left;">Read-only (Only applies to files in folder)</div>
<div class="r" style="left:459.6px;top:557.7px;width:10.5px;height:10px;background:#fff;border:1px solid #333;box-sizing:border-box;"></div>
<div class="t" style="left:472.11px;top:556.50px;font-size:10px;color:#1e1e1e;line-height:12px;transform:scaleX(0.817);transform-origin:left;">Hidden</div>
<div class="r" style="left:572px;top:554.6px;width:82px;height:16.2px;background:#e1e1e1;border:1px solid #adadad;box-sizing:border-box;"></div>
<div class="t" style="left:462.29999999999995px;width:300px;text-align:center;top:556.70px;font-size:10px;color:#1e1e1e;line-height:12px;transform:scaleX(0.860);transform-origin:center;">Advanced...</div>
<div class="r" style="left:480px;top:652px;width:57.3px;height:16.7px;background:#e1e1e1;border:2px solid #0a64c8;box-sizing:border-box;"></div>
<div class="t" style="left:358.45px;width:300px;text-align:center;top:654.30px;font-size:10px;color:#1e1e1e;line-height:12px;transform:scaleX(0.851);transform-origin:center;">OK</div>
<div class="r" style="left:544.2px;top:652px;width:57.6px;height:16.7px;background:#e1e1e1;border:1px solid #adadad;box-sizing:border-box;"></div>
<div class="t" style="left:422.54999999999995px;width:300px;text-align:center;top:654.30px;font-size:10px;color:#1e1e1e;line-height:12px;transform:scaleX(0.826);transform-origin:center;">Cancel</div>
<div class="r" style="left:608px;top:652px;width:58px;height:16.3px;background:#cccccc;border:1px solid #bfbfbf;box-sizing:border-box;"></div>
<div class="t" style="left:486.5px;width:300px;text-align:center;top:654.30px;font-size:10px;color:#9a9a9a;line-height:12px;transform:scaleX(0.815);transform-origin:center;">Apply</div>
<svg class="r" style="left:494px;top:337px" width="11" height="17" viewBox="0 0 11 17"><path d="M0.5 0.5 L0.5 13 L3.5 10.2 L5.8 15.5 L7.8 14.6 L5.6 9.5 L9.8 9.5 Z" fill="#fff" stroke="#222" stroke-width="0.9" stroke-linejoin="round"/></svg>
<div class="r" style="left:5px;top:684.5px;width:1270px;height:31.5px;background:linear-gradient(90deg,#11232a,#10222a 25%,#101b25 70%,#0f1420);"></div>
<div class="r" style="left:42px;top:684.5px;width:274px;height:31.5px;background:#25373d;"></div>
<svg class="r" style="left:15px;top:692px" width="17" height="17" viewBox="0 0 17 17"><path d="M1 2.6 L7.3 1.7 L7.3 7.9 L1 7.9 Z M8.2 1.5 L17 0.3 L17 7.9 L8.2 7.9 Z M1 8.8 L7.3 8.8 L7.3 15 L1 14.2 Z M8.2 8.8 L17 8.8 L17 16.4 L8.2 15.2 Z" fill="#fff"/></svg>
<svg class="r" style="left:52px;top:694px" width="14" height="13" viewBox="0 0 14 13"><circle cx="8.5" cy="5" r="4" stroke="#e8e8e8" stroke-width="1.2" fill="none"/><path d="M5.6 7.9 L1 12.5" stroke="#e8e8e8" stroke-width="1.3"/></svg>
<div class="t" style="left:74.42px;top:694.00px;font-size:11.8px;color:#9aa4a8;line-height:14px;transform:scaleX(0.974);transform-origin:left;">Type here to search</div>
<svg class="r" style="left:327px;top:693px" width="15" height="14" viewBox="0 0 15 14"><rect x="1.5" y="2.5" width="8" height="8" fill="none" stroke="#d0d0d0" stroke-width="1.2"/><rect x="0" y="1" width="11" height="1.2" fill="#d0d0d0"/><rect x="0" y="11" width="11" height="1.2" fill="#d0d0d0"/><circle cx="13" cy="2.5" r="1.2" fill="#e0e0e0"/><rect x="12.4" y="5" width="1.2" height="8" fill="#d0d0d0"/></svg>
<div class="r" style="left:356.8px;top:685.3px;width:126px;height:29.7px;background:#3d4b50;border:1px solid #55626a;box-sizing:border-box;"></div>
<svg class="r" style="left:364px;top:690px" width="19" height="16" viewBox="0 0 19 16"><rect x="1" y="0" width="6" height="6" rx="1.5" fill="#1e6cd0"/><path d="M3 6 L16 6 L18 10 L1 10 Z" fill="#f2f2f2"/><rect x="0.5" y="10" width="18" height="5.5" fill="#3a3a3a" stroke="#777" stroke-width="0.8"/><rect x="2.5" y="12" width="2" height="1.4" fill="#4c4"/></svg>
<div class="t" style="left:386.27px;top:694.60px;font-size:10.3px;color:#e6e8e8;line-height:12px;transform:scaleX(0.883);transform-origin:left;">Local Disk (C:)</div>
<div class="r" style="left:484.4px;top:685.3px;width:125.4px;height:29.7px;background:#5f686e;border:1px solid #8c949a;box-sizing:border-box;"></div>
<svg class="r" style="left:492px;top:693px" width="18" height="14" viewBox="0 0 18 14"><path d="M0 0.5 L7 0.5 L8.5 2.5 L18 2.5 L18 14 L0 14 Z" fill="#e6b32e"/><rect x="0" y="4" width="18" height="10" fill="#fad566"/></svg>
<div class="t" style="left:512.85px;top:694.60px;font-size:10.3px;color:#eeeeee;line-height:12px;transform:scaleX(0.913);transform-origin:left;">Windows Properties</div>
<svg class="r" style="left:620px;top:689px" width="21" height="21" viewBox="0 0 21 21"><g transform="scale(0.525)">
<circle cx="20.2" cy="20" r="19" fill="url(#eg1)"/>
<ellipse cx="21" cy="21.5" rx="5.2" ry="5.8" fill="#0f1d25"/>
<path d="M1.2 20 C1.5 12 8 10 13 10.5 C18 11 21 13 22.5 15.8 C18 14.5 13.5 17 13 22 C12.5 30 19 37.5 27 38.5 C25 39 22.5 39.2 20.2 39 C9.5 38.5 1.2 30 1.2 20 Z" fill="url(#eg2)"/>
<path d="M13 22 C13.5 17 18 14.5 22.5 15.8 C19 16.5 16 20 16.5 23.5 C17 28.5 21.5 31.5 27.5 31.5 C31.5 31.5 35.5 29.5 39 26.5 C37.5 34 31 38.8 25 38.6 C18 38.3 12.5 30 13 22 Z" fill="url(#eg3)"/>
</g></svg>
<div class="r" style="left:1080px;top:684.5px;width:40px;height:31.5px;background:#162028;"></div>
<svg class="r" style="left:1091px;top:693px" width="21" height="15" viewBox="0 0 21 15"><rect x="0.7" y="0.7" width="17" height="13" rx="1" fill="none" stroke="#c8c8c8" stroke-width="1.3"/><path d="M17.7 3 L20 3 L20 12 Q20 13.7 18.3 13.7" fill="none" stroke="#c8c8c8" stroke-width="1.2"/><rect x="3" y="5.5" width="5.5" height="5" fill="none" stroke="#c8c8c8" stroke-width="1.1"/><rect x="10" y="5.5" width="5.5" height="1.2" fill="#c8c8c8"/><rect x="10" y="8" width="5.5" height="1.2" fill="#c8c8c8"/><rect x="3" y="3" width="12.5" height="1.1" fill="#c8c8c8"/></svg>
<svg class="r" style="left:1124px;top:694px" width="12" height="13" viewBox="0 0 12 13"><path d="M2.5 2.5 Q5 0.5 8 2" stroke="#c8c8c8" stroke-width="1" fill="none"/><path d="M2.5 10.5 Q5 12.5 8 11" stroke="#c8c8c8" stroke-width="1" fill="none"/><rect x="1" y="4" width="7" height="5.5" rx="1" fill="none" stroke="#d8d8d8" stroke-width="1.2"/><path d="M8.5 6.8 L11 5 L11 8.5 Z" fill="#d8d8d8"/></svg>
<svg class="r" style="left:1141px;top:694px" width="16" height="14" viewBox="0 0 16 14"><circle cx="7" cy="7" r="6.2" fill="none" stroke="#d0d0d0" stroke-width="1.2"/><ellipse cx="7" cy="7" rx="2.8" ry="6.2" fill="none" stroke="#d0d0d0" stroke-width="1"/><path d="M1 5 L13 5 M1 9 L13 9" stroke="#d0d0d0" stroke-width="1"/><circle cx="12" cy="11" r="2.8" fill="#101820" stroke="#d0d0d0" stroke-width="0.9"/></svg>
<svg class="r" style="left:1160px;top:693px" width="16" height="15" viewBox="0 0 16 15"><path d="M1 5 L3.5 5 L7 1.5 L7 12.5 L3.5 9 L1 9 Z" fill="none" stroke="#d0d0d0" stroke-width="1.1"/><circle cx="12" cy="10.5" r="3.4" fill="#e03040"/><path d="M10.6 9.1 L13.4 11.9 M13.4 9.1 L10.6 11.9" stroke="#fff" stroke-width="0.9"/></svg>
<div class="t" style="left:1052.7px;width:300px;text-align:center;top:687.30px;font-size:9.6px;color:#ffffff;line-height:12px;transform:scaleX(0.934);transform-origin:center;">2:20 PM</div>
<div class="t" style="left:1052.8px;width:300px;text-align:center;top:701.00px;font-size:9.6px;color:#ffffff;line-height:12px;transform:scaleX(0.953);transform-origin:center;">1/2/2022</div>
<svg class="r" style="left:1236px;top:694px" width="16" height="14" viewBox="0 0 16 14"><path d="M0.7 0.7 L14.5 0.7 L14.5 10 L9 10 L7.6 12.5 L6.2 10 L0.7 10 Z" fill="none" stroke="#d8d8d8" stroke-width="1.2"/></svg>
<div class="r" style="left:147px;top:716px;width:1px;height:4px;background:#888;"></div>
<div class="r" style="left:1236px;top:718px;width:9px;height:2px;background:#a0a0a0;border-radius:3px 3px 0 0;"></div>
<div class="t" style="right:8.32px;top:657.50px;font-size:9.6px;color:#ffffff;line-height:12px;transform:scaleX(0.963);transform-origin:right;">Windows 10 Pro</div>
<div class="t" style="right:8.34px;top:672.10px;font-size:9.6px;color:#ffffff;line-height:12px;transform:scaleX(0.941);transform-origin:right;">Evaluation copy. Build 21390.co_release.210521-1658</div>
</body></html>
